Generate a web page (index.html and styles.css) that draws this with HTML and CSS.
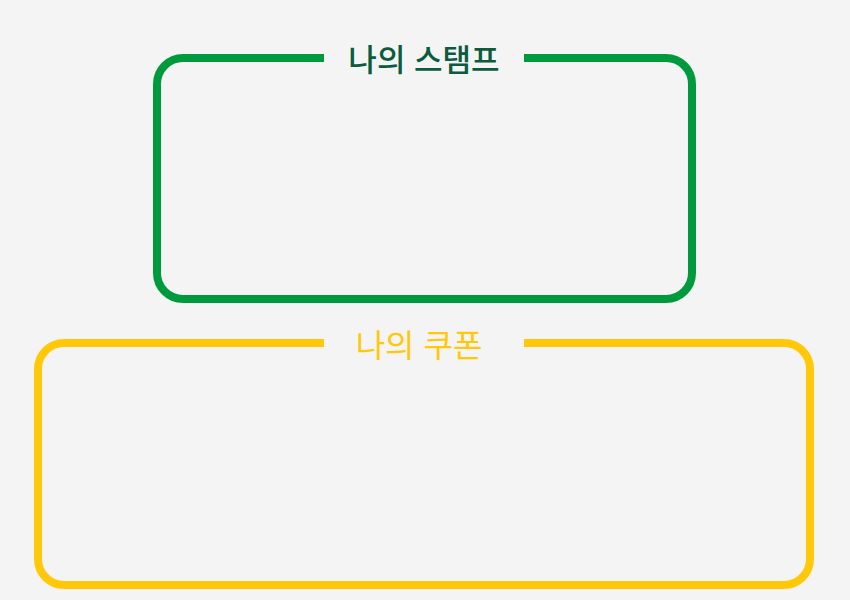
FILE: index.html
```html
<!DOCTYPE html>
<html lang="ko">
<head>
    <meta charset="UTF-8">
    <meta name="viewport" content="width=device-width, initial-scale=1.0">
    <title>나의 스탬프</title>
    <link rel="stylesheet" href="styles.css">
</head>
<body>

    <main class="wallet">
        <fieldset class="panel panel-stamp">
            <legend class="panel-title">나의 스탬프</legend>
            <div class="panel-body"></div>
        </fieldset>

        <fieldset class="panel panel-coupon">
            <legend class="panel-title">나의 쿠폰</legend>
            <div class="panel-body"></div>
        </fieldset>
    </main>

</body>
</html>
```

FILE: styles.css
```css
* {
    margin: 0;
    padding: 0;
    box-sizing: border-box;
}

body {
    font-family: 'Noto Sans CJK KR', 'Noto Sans', sans-serif;
    background-color: #f4f4f4;
    min-height: 100vh;
}

.wallet {
    display: flex;
    flex-direction: column;
    align-items: center;
    gap: 18px;
    padding: 36px 2px 0 0;
}

.panel {
    border: 8px solid;
    border-radius: 30px;
    padding: 0;
    margin: 0;
    min-width: 0;
}

.panel-title {
    width: 200px;
    margin: 0 auto;
    padding: 0;
    text-align: center;
    font-size: 31px;
    line-height: 44px;
}

.panel-stamp {
    width: 543px;
    border-color: #009a3e;
}

.panel-stamp .panel-title {
    color: #0b5b3d;
    font-weight: 500;
}

.panel-stamp .panel-body {
    height: 215px;
}

.panel-coupon {
    width: 780px;
    border-color: #ffc90a;
}

.panel-coupon .panel-title {
    color: #ffc90a;
    font-weight: 400;
    font-size: 32px;
    padding-right: 10px;
}

.panel-coupon .panel-body {
    height: 216px;
}
```
